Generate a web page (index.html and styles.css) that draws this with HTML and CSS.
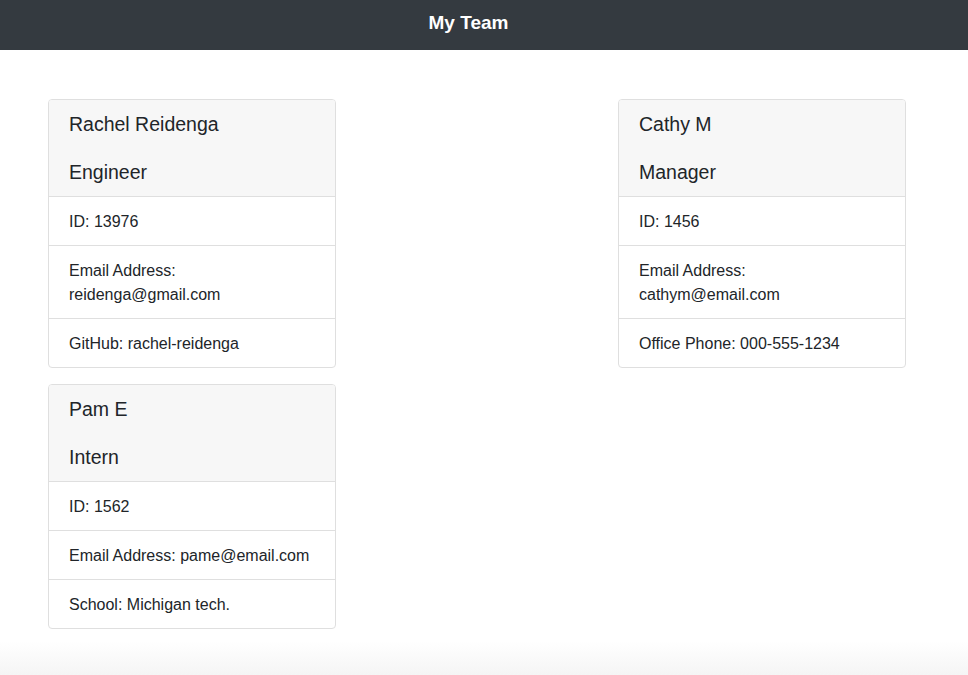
FILE: index.html
```html
<!DOCTYPE html>
<html lang="en">
<head>
<meta charset="utf-8">
<title>My Team</title>
<link rel="stylesheet" href="styles.css">
</head>
<body>
<header class="navbar"><span class="brand">My Team</span></header>
<main class="team">
  <div class="column">
    <div class="card">
      <div class="card-header">
        <h2 class="name">Rachel Reidenga</h2>
        <h3 class="role">Engineer</h3>
      </div>
      <ul class="list">
        <li>ID: 13976</li>
        <li>Email Address: reidenga@gmail.com</li>
        <li>GitHub: rachel-reidenga</li>
      </ul>
    </div>
    <div class="card">
      <div class="card-header">
        <h2 class="name">Pam E</h2>
        <h3 class="role">Intern</h3>
      </div>
      <ul class="list">
        <li>ID: 1562</li>
        <li>Email Address: pame@email.com</li>
        <li>School: Michigan tech.</li>
      </ul>
    </div>
  </div>
  <div class="column">
    <div class="card">
      <div class="card-header">
        <h2 class="name">Cathy M</h2>
        <h3 class="role">Manager</h3>
      </div>
      <ul class="list">
        <li>ID: 1456</li>
        <li>Email Address: cathym@email.com</li>
        <li>Office Phone: 000-555-1234</li>
      </ul>
    </div>
  </div>
</main>
</body>
</html>
```
FILE: styles.css
```css
html, body {
  margin: 0;
  padding: 0;
}
body {
  min-height: 100vh;
  font-family: "Liberation Sans", Arial, sans-serif;
  font-size: 16px;
  line-height: 24px;
  color: #212529;
  background: linear-gradient(to bottom, #ffffff 0, #ffffff calc(100% - 34px), #f5f5f5 100%);
}
.navbar {
  background: #343a40;
  height: 50px;
  box-sizing: border-box;
  padding: 11px 31px 15px 0;
  display: flex;
  justify-content: center;
}
.brand {
  color: #ffffff;
  font-weight: bold;
  font-size: 19px;
  line-height: 24px;
}
.team {
  display: flex;
  justify-content: space-between;
  padding: 49px 62px 0 48px;
}
.column {
  width: 288px;
  display: flex;
  flex-direction: column;
  gap: 16px;
}
.card {
  border: 1px solid #dfdfdf;
  border-radius: 4px;
  background: #fff;
  overflow: hidden;
}
.card-header {
  background: #f7f7f7;
  border-bottom: 1px solid #dfdfdf;
  padding: 12px 20px;
  display: flex;
  flex-direction: column;
  gap: 24px;
}
.name, .role {
  margin: 0;
  font-size: 19.5px;
  font-weight: normal;
  line-height: 24px;
  color: #212529;
}
.list {
  list-style: none;
  margin: 0;
  padding: 0;
}
.list li {
  padding: 13px 20px 11px;
  border-bottom: 1px solid #dfdfdf;
}
.list li:last-child {
  border-bottom: 0;
}
```
